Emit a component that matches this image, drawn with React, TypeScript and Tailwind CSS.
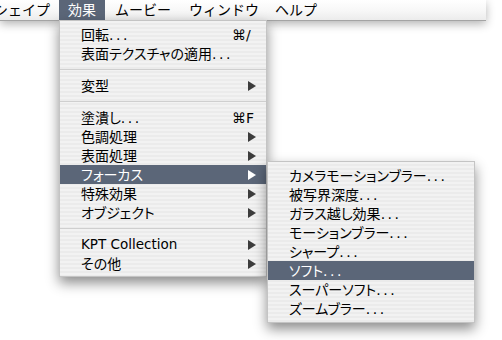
const Arrow = ({ active }: { active?: boolean }) => (
	<svg width="8" height="10" viewBox="0 0 8 10" className={active ? 'fill-white' : 'fill-[#3c3c3c]'}>
		<path d="M0 0 L8 5 L0 10 Z" />
	</svg>
);

type Item =
	| { sep: true }
	| { label: string; dots?: boolean; key?: string; sub?: boolean; active?: boolean };

const mainItems: Item[] = [
	{ label: '回転', dots: true, key: '⌘/' },
	{ label: '表面テクスチャの適用', dots: true },
	{ sep: true },
	{ label: '変型', sub: true },
	{ sep: true },
	{ label: '塗潰し', dots: true, key: '⌘F' },
	{ label: '色調処理', sub: true },
	{ label: '表面処理', sub: true },
	{ label: 'フォーカス', sub: true, active: true },
	{ label: '特殊効果', sub: true },
	{ label: 'オブジェクト', sub: true },
	{ sep: true },
	{ label: 'KPT Collection', sub: true },
	{ label: 'その他', sub: true },
];

const focusItems = [
	'カメラモーションブラー',
	'被写界深度',
	'ガラス越し効果',
	'モーションブラー',
	'シャープ',
	'ソフト',
	'スーパーソフト',
	'ズームブラー',
];

const menuBg =
	'bg-[repeating-linear-gradient(to_bottom,#f2f2f2_0px,#f2f2f2_2px,#ebebeb_2px,#ebebeb_4px)]';

const Label = ({ text, dots }: { text: string; dots?: boolean }) => (
	<span className={`flex-1 whitespace-nowrap ${/^[A-Za-z ]+$/.test(text) ? 'text-[13.5px]' : ''}`}>
		{text}
		{dots && <span className="tracking-[2.5px]">...</span>}
	</span>
);

const Row = ({ item }: { item: Exclude<Item, { sep: true }> }) => (
	<div
		className={`flex h-[19px] items-center pl-[21px] ${
			item.active ? 'bg-[#5b6678] text-white' : 'text-black'
		}`}
	>
		<Label text={item.label} dots={item.dots} />
		{item.key && <span className="w-[34px]">{item.key}</span>}
		{item.sub && (
			<span className="flex w-[18px] items-center">
				<Arrow active={item.active} />
			</span>
		)}
	</div>
);

const FocusMenu = () => (
	<div
		className={`absolute top-[-4px] left-[207px] w-[208px] py-[4px] ${menuBg} border border-[#c4c4c4] shadow-[0_6px_12px_rgba(0,0,0,0.45)]`}
	>
		{focusItems.map((t) => (
			<div
				key={t}
				className={`flex h-[19px] items-center pl-[21px] ${
					t === 'ソフト' ? 'bg-[#5b6678] text-white' : 'text-black'
				}`}
			>
				<Label text={t} dots />
			</div>
		))}
	</div>
);

const App = () => (
	<div className="relative h-[340px] w-[502px] overflow-hidden bg-white font-['DejaVu_Sans','Noto_Sans_CJK_JP',sans-serif] text-[14px] leading-none">
		{/* menu bar */}
		<div className="flex h-[21px] w-[486px] items-stretch border-b border-[#a4a4a4] bg-[linear-gradient(#ffffff,#f7f7f7_55%,#ececec)] shadow-[0_3px_10px_rgba(0,0,0,0.3)]">
			<div className="-ml-[6px] flex items-center pr-[9px]">シェイプ</div>
			<div className="flex w-[46px] items-center justify-center bg-[#5b6678] text-white">効果</div>
			<div className="flex items-center px-[10px]">ムービー</div>
			<div className="flex items-center px-[8px]">ウィンドウ</div>
			<div className="flex items-center px-[8px]">ヘルプ</div>
		</div>

		{/* 効果 menu */}
		<div
			className={`absolute top-[20px] left-[59px] w-[208px] pt-[4px] pb-[3px] ${menuBg} border border-[#c4c4c4] shadow-[0_6px_12px_rgba(0,0,0,0.45)] [font-feature-settings:'palt']`}
		>
			{mainItems.map((item, i) =>
				'sep' in item ? (
					<div key={i} className="flex h-[13px] items-center">
						<div className="h-px w-full bg-[#cfcfcf]" />
					</div>
				) : (
					<div key={i} className="relative">
						<Row item={item} />
						{item.active && <FocusMenu />}
					</div>
				),
			)}
		</div>
	</div>
);

export default App;
